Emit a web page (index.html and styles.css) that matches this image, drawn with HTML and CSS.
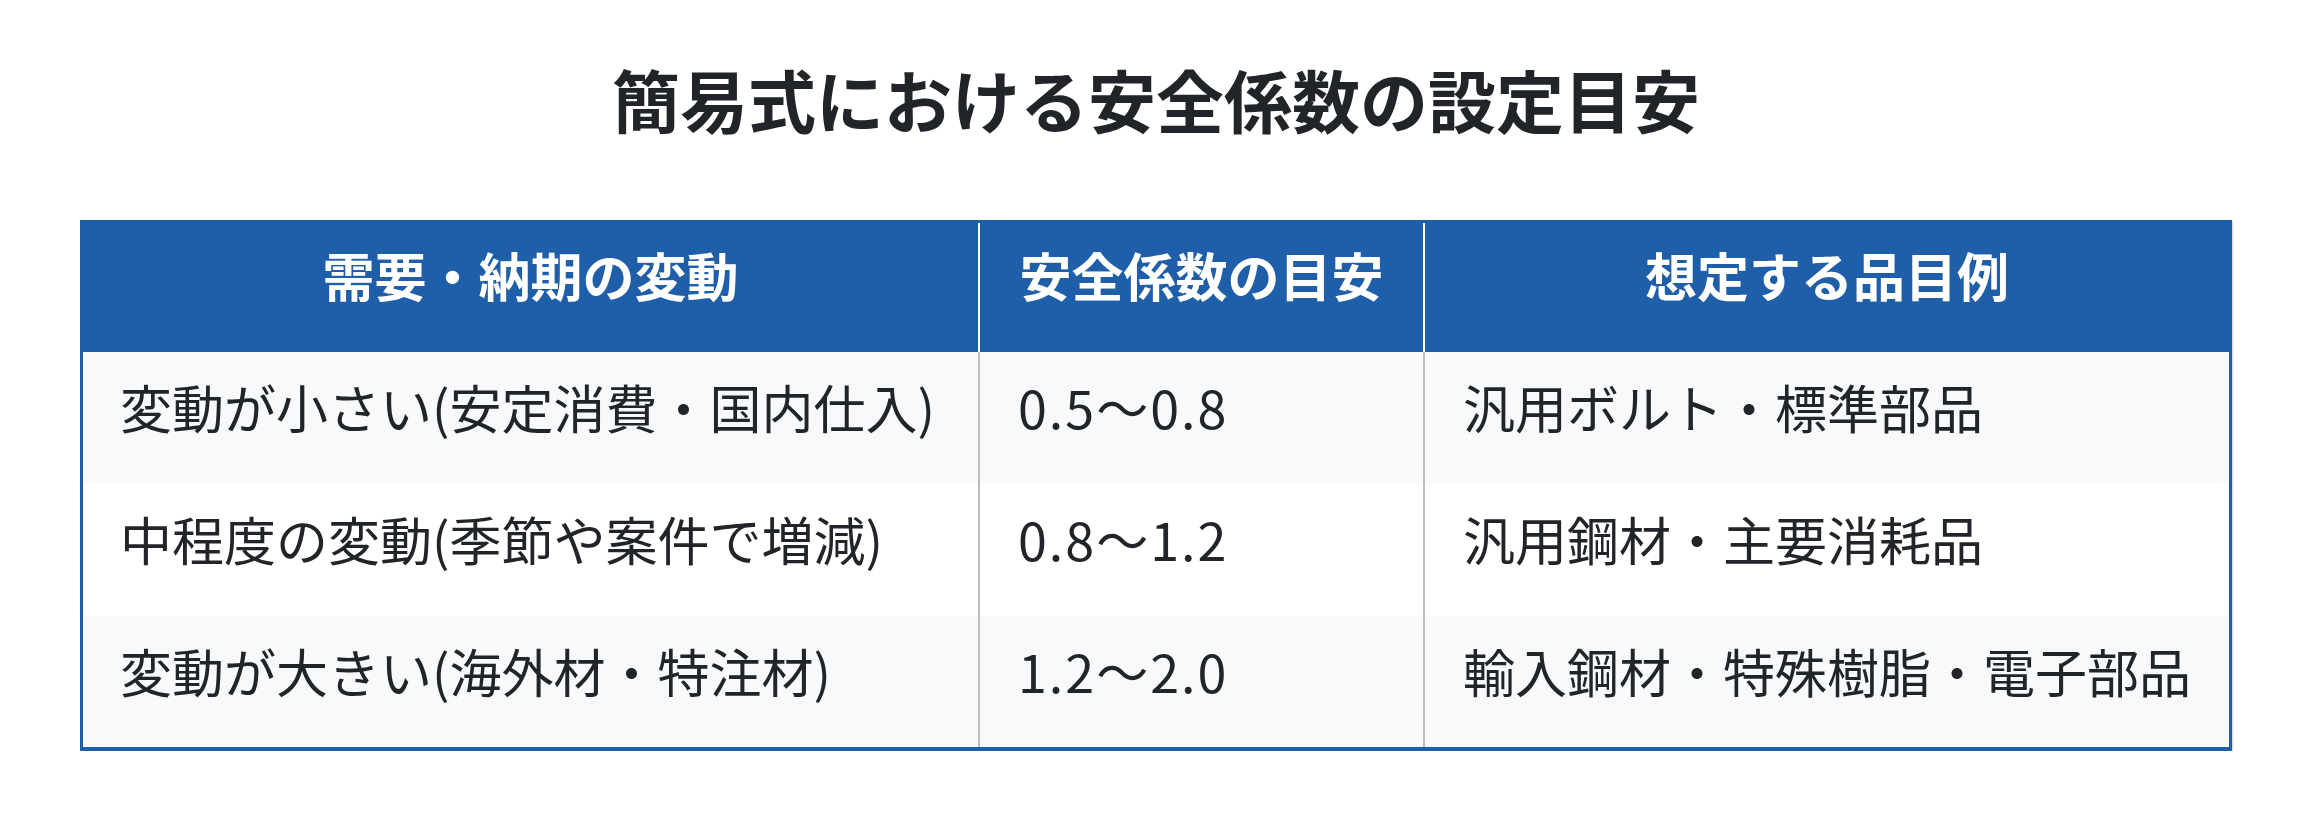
FILE: index.html
```html
<!DOCTYPE html>
<html lang="ja">
<head>
<meta charset="utf-8">
<title>簡易式における安全係数の設定目安</title>
<link rel="stylesheet" href="styles.css">
</head>
<body>
<main class="page">
  <h1 class="title">簡易式における安全係数の設定目安</h1>
  <div class="table">
    <div class="cell head">需要・納期の変動</div>
    <div class="cell head divided">安全係数の目安</div>
    <div class="cell head divided">想定する品目例</div>

    <div class="cell odd">変動が小さい(安定消費・国内仕入)</div>
    <div class="cell odd divided num">0.5〜0.8</div>
    <div class="cell odd divided">汎用ボルト・標準部品</div>

    <div class="cell even">中程度の変動(季節や案件で増減)</div>
    <div class="cell even divided num">0.8〜1.2</div>
    <div class="cell even divided">汎用鋼材・主要消耗品</div>

    <div class="cell odd">変動が大きい(海外材・特注材)</div>
    <div class="cell odd divided num">1.2〜2.0</div>
    <div class="cell odd divided">輸入鋼材・特殊樹脂・電子部品</div>
  </div>
</main>
</body>
</html>
```

FILE: styles.css
```css
html, body {
  margin: 0;
  padding: 0;
  background: #ffffff;
}

body {
  font-family: "Noto Sans CJK JP", "Noto Sans", sans-serif;
  color: #212529;
}

.page {
  padding: 59px 78px 0 80px;
}

.title {
  margin: 0;
  font-size: 68px;
  line-height: 80px;
  font-weight: 700;
  text-align: center;
  color: #212529;
}

.table {
  margin-top: 81px;
  display: grid;
  grid-template-columns: 895px 445px 1fr;
  border: 3px solid #1f5ea8;
  border-bottom-width: 4px;
  box-shadow: 1px 1px 1px rgba(0, 0, 0, 0.15);
}

.cell {
  font-size: 52px;
  line-height: 60px;
  padding: 25px 30px 46px 37px;
  white-space: nowrap;
}

.head {
  background: #1f5ea8;
  color: #ffffff;
  font-weight: 700;
  text-align: center;
  padding: 22px 20px 47px;
}

.divided {
  border-left: 2px solid #bdbdbd;
  padding-left: 38px;
}

.num {
  letter-spacing: 2px;
}

.head.divided {
  border-left-color: #ffffff;
  padding-left: 20px;
}

.odd {
  background: #f8f9fb;
}

.even {
  background: #ffffff;
  padding-top: 26px;
  padding-bottom: 47px;
}
```
